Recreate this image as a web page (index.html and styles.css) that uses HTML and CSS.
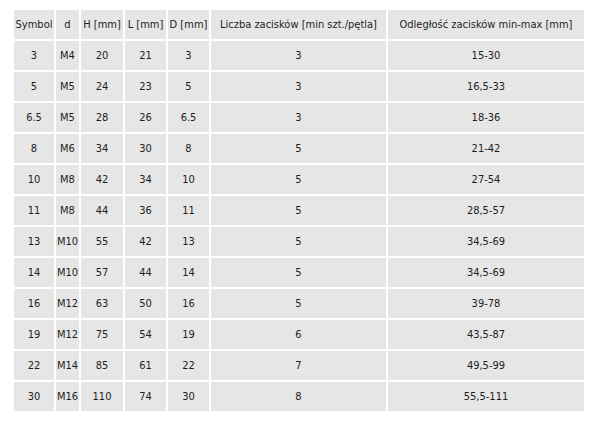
FILE: index.html
```
<!DOCTYPE html>
<html>
<head>
<meta charset="utf-8">
<link rel="stylesheet" href="styles.css">
</head>
<body>
<table class="spec">
<colgroup>
<col class="c-sym"><col class="c-d"><col class="c-h"><col class="c-l"><col class="c-dd"><col class="c-cnt"><col class="c-dist">
</colgroup>
<thead>
<tr><th>Symbol</th><th>d</th><th>H [mm]</th><th>L [mm]</th><th>D [mm]</th><th>Liczba zacisków [min szt./pętla]</th><th>Odległość zacisków min-max [mm]</th></tr>
</thead>
<tbody>
<tr><td>3</td><td>M4</td><td>20</td><td>21</td><td>3</td><td>3</td><td>15-30</td></tr>
<tr><td>5</td><td>M5</td><td>24</td><td>23</td><td>5</td><td>3</td><td>16,5-33</td></tr>
<tr><td>6.5</td><td>M5</td><td>28</td><td>26</td><td>6.5</td><td>3</td><td>18-36</td></tr>
<tr><td>8</td><td>M6</td><td>34</td><td>30</td><td>8</td><td>5</td><td>21-42</td></tr>
<tr><td>10</td><td>M8</td><td>42</td><td>34</td><td>10</td><td>5</td><td>27-54</td></tr>
<tr><td>11</td><td>M8</td><td>44</td><td>36</td><td>11</td><td>5</td><td>28,5-57</td></tr>
<tr><td>13</td><td>M10</td><td>55</td><td>42</td><td>13</td><td>5</td><td>34,5-69</td></tr>
<tr><td>14</td><td>M10</td><td>57</td><td>44</td><td>14</td><td>5</td><td>34,5-69</td></tr>
<tr><td>16</td><td>M12</td><td>63</td><td>50</td><td>16</td><td>5</td><td>39-78</td></tr>
<tr><td>19</td><td>M12</td><td>75</td><td>54</td><td>19</td><td>6</td><td>43,5-87</td></tr>
<tr><td>22</td><td>M14</td><td>85</td><td>61</td><td>22</td><td>7</td><td>49,5-99</td></tr>
<tr><td>30</td><td>M16</td><td>110</td><td>74</td><td>30</td><td>8</td><td>55,5-111</td></tr>
</tbody>
</table>
</body>
</html>
```
FILE: styles.css
```
html, body {
  margin: 0;
  padding: 0;
  background: #ffffff;
}
body {
  padding: 8px 0 0 12px;
  font-family: "DejaVu Sans Condensed", "DejaVu Sans", sans-serif;
  font-size: 11px;
  color: #1e1e1e;
}
.spec {
  border-collapse: separate;
  border-spacing: 2px;
  table-layout: fixed;
  width: 572px;
}
.c-sym { width: 40px; }
.c-d { width: 23px; }
.c-h { width: 42px; }
.c-l { width: 41px; }
.c-dd { width: 41px; }
.c-cnt { width: 175px; }
.c-dist { width: 196px; }
.spec th, .spec td {
  background: #e6e6e6;
  height: 29px;
  padding: 0;
  text-align: center;
  vertical-align: middle;
  font-weight: normal;
  white-space: nowrap;
}
```
